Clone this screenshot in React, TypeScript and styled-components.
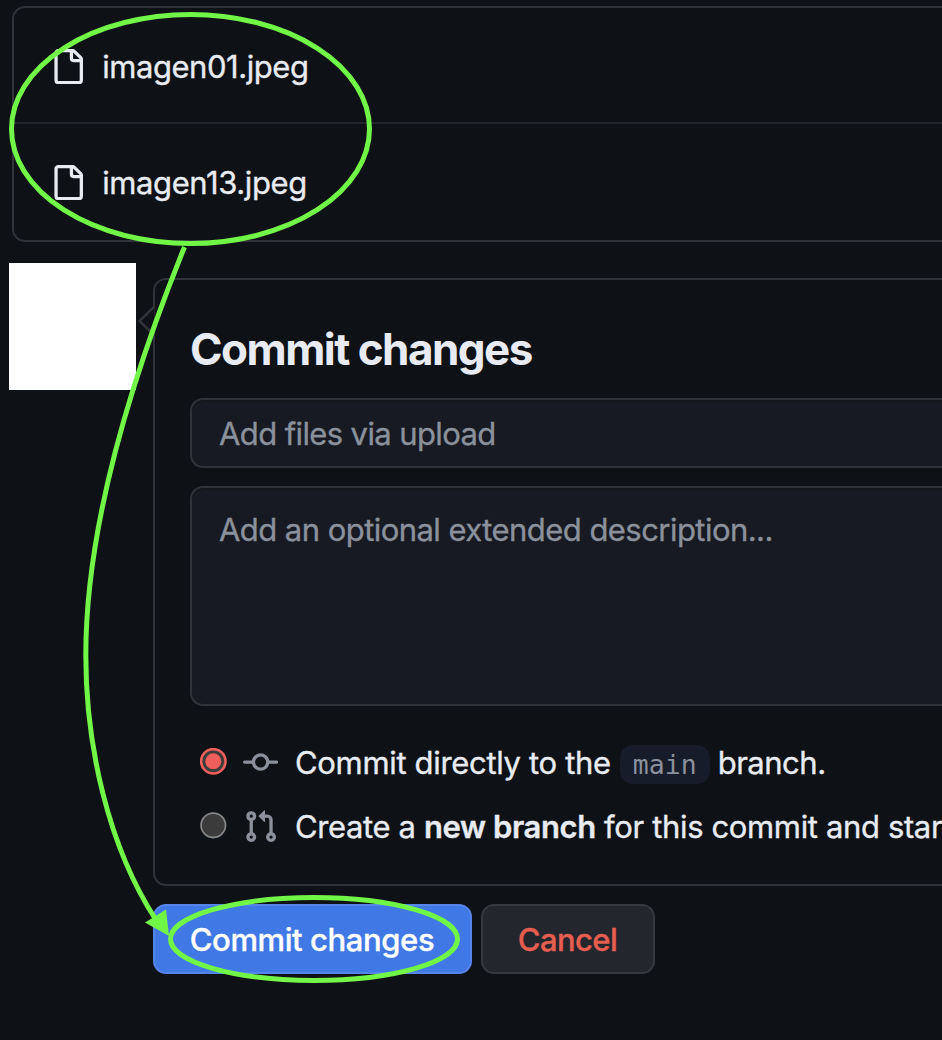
import React from "react";
import styled, { createGlobalStyle } from "styled-components";

const GlobalStyle = createGlobalStyle`
  *, *::before, *::after { box-sizing: border-box; }
  body {
    margin: 0;
    background: #0e1116;
    color: #e8ecf2;
    font-family: Inter, "Liberation Sans", sans-serif;
    -webkit-font-smoothing: antialiased;
  }
`;

const Page = styled.main`
  position: relative;
  width: 942px;
  height: 1040px;
  padding-top: 6px;
  overflow: hidden;
  background: #0e1116;
`;

const FileList = styled.ul`
  list-style: none;
  margin: 0 0 0 12px;
  padding: 0;
  height: 236px;
  width: 960px;
  border: 2px solid #30343a;
  border-radius: 13px;
`;

const FileRow = styled.li`
  display: flex;
  height: 116px;
  padding: 41px 0 0 36px;
  &:first-child { border-bottom: 2px solid #23272d; }
`;

const Label = styled.span<{ $track?: number; $bold?: boolean }>`
  font-size: 31px;
  font-weight: ${(p) => (p.$bold ? 600 : 400)};
  -webkit-text-stroke: 0.35px currentColor;
  letter-spacing: ${(p) => p.$track ?? 0}px;
  line-height: 36px;
  white-space: pre;
`;

const FileName = styled(Label)`
  margin-left: 17px;
`;

const CommitArea = styled.section`
  display: flex;
  gap: 17px;
  margin: 21px 0 0 9px;
`;

const Avatar = styled.div`
  flex: none;
  width: 127px;
  height: 127px;
  background: #fff;
`;

const CommitPanel = styled.div`
  position: relative;
  flex: none;
  width: 820px;
  height: 608px;
  margin-top: 15px;
  padding: 43px 0 0 35px;
  border: 2px solid #30343a;
  border-radius: 13px;
`;

const Notch = styled.svg`
  position: absolute;
  left: -18px;
  top: 24px;
`;

const Title = styled.h2<{ $track: number }>`
  margin: 0 0 18px;
  height: 57px;
  line-height: 52px;
  font-size: 44px;
  font-weight: 650;
  letter-spacing: ${(p) => p.$track}px;
  white-space: nowrap;
`;

const Field = styled.div<{ $height: number; $pad: number }>`
  width: 800px;
  height: ${(p) => p.$height}px;
  padding: ${(p) => p.$pad}px 0 0 27px;
  background: #171a22;
  border: 2px solid #30343a;
  border-radius: 13px;
  box-shadow: inset 0 2px 0 #14181c;
  color: #8b919c;
  & + & { margin-top: 18px; }
`;

const Options = styled.div`
  display: flex;
  flex-direction: column;
  gap: 24px;
  margin: 39px 0 0 10px;
`;

const Option = styled.label`
  display: flex;
  align-items: flex-start;
  height: 40px;
`;

const Radio = styled.svg`
  flex: none;
  margin-top: 3px;
`;

const OptionIcon = styled.span`
  flex: none;
  width: 36px;
  height: 36px;
  margin: 0 16px 0 16px;
  color: #8b919c;
`;

const Branch = styled.code`
  flex: none;
  width: 90px;
  height: 39px;
  margin-left: 9px;
  margin-right: 8px;
  border-radius: 13px;
  background: #161c2a;
  color: #8b919c;
  font-family: "DejaVu Sans Mono", "Liberation Mono", monospace;
  font-size: 26.5px;
  line-height: 40px;
  text-align: center;
`;

const Actions = styled.div`
  display: flex;
  gap: 9px;
  margin: 18px 0 0 153px;
`;

const Button = styled.button<{ $primary?: boolean; $width: number; $track: number }>`
  width: ${(p) => p.$width}px;
  height: 70px;
  padding: 1px 1px 0 0;
  border: 2px solid ${(p) => (p.$primary ? "#5585eb" : "#35383e")};
  border-radius: 13px;
  background: ${(p) => (p.$primary ? "#4078e6" : "#23262d")};
  color: ${(p) => (p.$primary ? "#fff" : "#e65e50")};
  font: 500 31px Inter, "Liberation Sans", sans-serif;
  -webkit-text-stroke: 0.35px currentColor;
  letter-spacing: ${(p) => p.$track}px;
  white-space: nowrap;
`;

const Annotation = styled.svg`
  position: absolute;
  inset: 0;
  pointer-events: none;
`;

const Glyph = styled.svg`
  flex: none;
  fill: currentColor;
`;

const Octicon = ({ d }: { d: string }) => (
  <Glyph width={35.2} height={35.2} viewBox="0 0 16 16">
    <path d={d} />
  </Glyph>
);

const RadioMark = ({ on }: { on?: boolean }) => (
  <Radio width="27" height="27" viewBox="0 0 27 27">
    <circle cx="13.3" cy="13.3" r="12.2" fill="#3b3b3b" stroke={on ? "#ee5f5b" : "#858585"} strokeWidth={on ? 2.6 : 1.8} />
    {on && <circle cx="13.3" cy="13.3" r="8" fill="#ee5f5b" />}
  </Radio>
);

const FILE =
  "M2 1.75C2 .784 2.784 0 3.75 0h6.586c.464 0 .909.184 1.237.513l2.914 2.914c.329.328.513.773.513 1.237v9.586A1.75 1.75 0 0 1 13.25 16h-9.5A1.75 1.75 0 0 1 2 14.25Zm1.75-.25a.25.25 0 0 0-.25.25v12.5c0 .138.112.25.25.25h9.5a.25.25 0 0 0 .25-.25V6h-2.75A1.75 1.75 0 0 1 9 4.25V1.5Zm6.75.062V4.25c0 .138.112.25.25.25h2.688l-.011-.013-2.914-2.914-.013-.011Z";
const COMMIT =
  "M11.93 8.5a4.002 4.002 0 0 1-7.86 0H.75a.75.75 0 0 1 0-1.5h3.32a4.002 4.002 0 0 1 7.86 0h3.32a.75.75 0 0 1 0 1.5Zm-1.43-.75a2.5 2.5 0 1 0-5 0 2.5 2.5 0 0 0 5 0Z";
const PULL_REQUEST =
  "M1.5 3.25a2.25 2.25 0 1 1 3 2.122v5.256a2.251 2.251 0 1 1-1.5 0V5.372A2.25 2.25 0 0 1 1.5 3.25Zm5.677-.177L9.573.677A.25.25 0 0 1 10 .854V2.5h1A2.5 2.5 0 0 1 13.5 5v5.628a2.251 2.251 0 1 1-1.5 0V5a1 1 0 0 0-1-1h-1v1.646a.25.25 0 0 1-.427.177L7.177 3.427a.25.25 0 0 1 0-.354ZM3.75 2.5a.75.75 0 1 0 0 1.5.75.75 0 0 0 0-1.5Zm0 9.5a.75.75 0 1 0 0 1.5.75.75 0 0 0 0-1.5Zm8.25.75a.75.75 0 1 0 1.5 0 .75.75 0 0 0-1.5 0Z";

const files = [
  { name: "imagen01.jpeg", track: -0.45 },
  { name: "imagen13.jpeg", track: -0.4 },
];

export default function App() {
  return (
    <>
      <GlobalStyle />
      <Page>
        <FileList>
          {files.map((f) => (
            <FileRow key={f.name}>
              <Octicon d={FILE} />
              <FileName $track={f.track}>{f.name}</FileName>
            </FileRow>
          ))}
        </FileList>

        <CommitArea>
          <Avatar />
          <CommitPanel>
            <Notch width="20" height="34" viewBox="0 0 20 34">
              <path d="M17.5 2.5 2.5 17 17.5 31.5" fill="#0e1116" stroke="#30343a" strokeWidth="2.5" />
            </Notch>
            <Title $track={-1.52}>Commit changes</Title>
            <Field $height={70} $pad={16}>
              <Label $track={-0.61}>Add files via upload</Label>
            </Field>
            <Field $height={220} $pad={24}>
              <Label $track={-0.55}>Add an optional extended description...</Label>
            </Field>
            <Options>
              <Option>
                <RadioMark on />
                <OptionIcon><Octicon d={COMMIT} /></OptionIcon>
                <Label $track={-0.33}>Commit directly to the</Label>
                <Branch>main</Branch>
                <Label $track={-0.5}>branch.</Label>
              </Option>
              <Option>
                <RadioMark />
                <OptionIcon><Octicon d={PULL_REQUEST} /></OptionIcon>
                <Label $track={-0.38}>Create a </Label>
                <Label $bold $track={-0.4}>new branch</Label>
                <Label $track={-0.36}> for this commit and star</Label>
              </Option>
            </Options>
          </CommitPanel>
        </CommitArea>

        <Actions>
          <Button $primary $width={319} $track={-0.4}>Commit changes</Button>
          <Button $width={174} $track={-0.6}>Cancel</Button>
        </Actions>

        <Annotation width="942" height="1040" viewBox="0 0 942 1040" fill="none" stroke="#71f648" strokeWidth="5">
          <ellipse cx="190.5" cy="129" rx="179" ry="114.5" />
          <path d="M184.5 247C127 389 85.8 530 85.8 655C85.8 745 108 846 156 920" />
          <path d="M169 936 145 922.5 166 909.5Z" fill="#71f648" stroke="none" />
          <ellipse cx="314" cy="939" rx="143.5" ry="41.5" />
        </Annotation>
      </Page>
    </>
  );
}
